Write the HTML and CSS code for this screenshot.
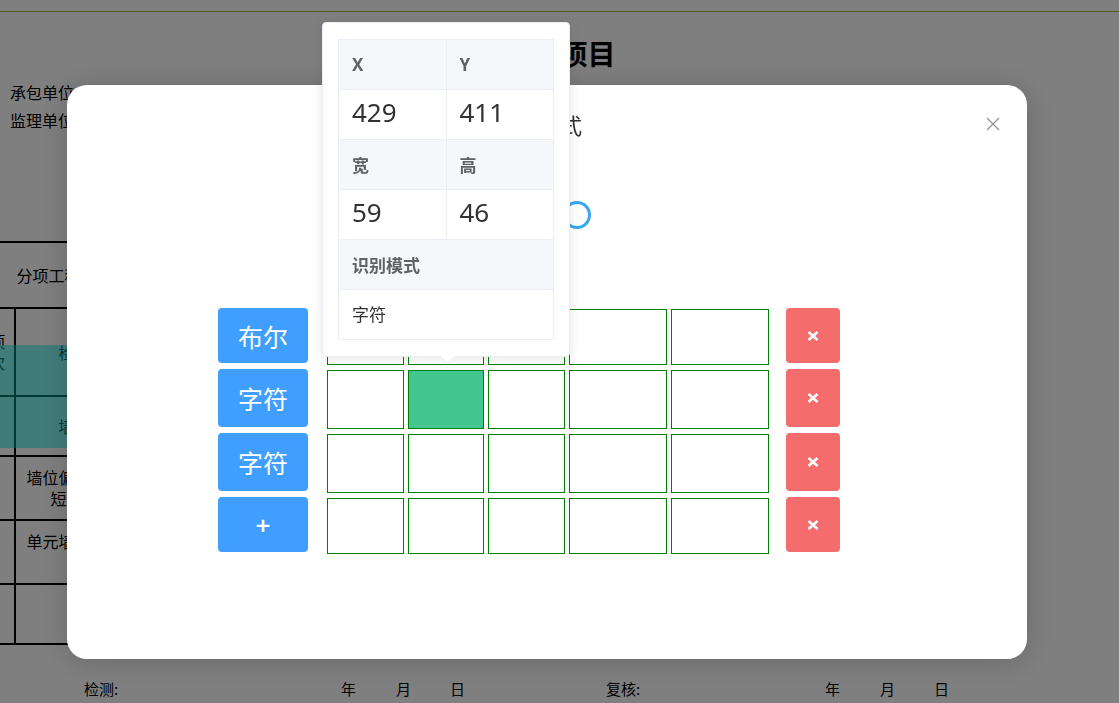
FILE: index.html
```html
<!DOCTYPE html>
<html lang="zh-CN">
<head>
  <meta charset="UTF-8">
  <title>识别模式</title>
  <meta name="viewport" content="width=device-width, initial-scale=1.0">
  <link rel="stylesheet" href="styles.css">
</head>
<body>
  <div class="doc">
    <div class="doc-rule"></div>
    <h1 class="doc-title">检验项目</h1>
    <div class="doc-info">
      <p>承包单位：</p>
      <p>监理单位：</p>
    </div>
    <table class="doc-table">
      <colgroup><col class="c1"><col class="c2"><col class="c3"></colgroup>
      <tr class="h66"><td colspan="3" class="head-cell">分项工程名称</td></tr>
      <tr class="h88"><td>项<br>次</td><td>检查项</td><td></td></tr>
      <tr class="h60"><td></td><td>墙间距</td><td></td></tr>
      <tr class="h64"><td></td><td>墙位偏差长边及<br>短边方向</td><td></td></tr>
      <tr class="h64"><td></td><td>单元墙体垂直度<br>允许</td><td></td></tr>
      <tr class="h60"><td></td><td>平整</td><td></td></tr>
    </table>
    <div class="doc-sign">
      <span class="s-who">检测:</span>
      <span class="s-y">年</span><span class="s-m">月</span><span class="s-d">日</span>
      <span class="s-who2">复核:</span>
      <span class="s-y">年</span><span class="s-m">月</span><span class="s-d">日</span>
    </div>
    <div class="mark"></div>
  </div>

  <div class="mask">
    <div class="dialog">
      <div class="popover">
        <table class="desc">
          <tr><th>X</th><th>Y</th></tr>
          <tr><td class="num">429</td><td class="num">411</td></tr>
          <tr><th>宽</th><th>高</th></tr>
          <tr><td class="num">59</td><td class="num">46</td></tr>
          <tr><th colspan="2">识别模式</th></tr>
          <tr><td colspan="2">字符</td></tr>
        </table>
      </div>

      <div class="dialog-header">
        <span class="dialog-title">识别模式</span>
        <button class="dialog-close">
          <svg width="14" height="14" viewBox="0 0 14 14"><path d="M1 1 L13 13 M13 1 L1 13" stroke="#909399" stroke-width="1.3" fill="none"/></svg>
        </button>
      </div>

      <div class="dialog-body">
        <div class="spin-row">
          <svg width="30" height="30" viewBox="0 0 30 30"><circle cx="15" cy="15" r="12.5" stroke="#38a7ee" stroke-width="3" fill="none"/></svg>
        </div>

        <div class="editor">
          <div class="row">
            <button class="mode-btn">布尔</button>
            <div class="cells"><div class="cell"></div><div class="cell"></div><div class="cell"></div><div class="cell"></div><div class="cell"></div></div>
            <button class="del-btn"><svg width="12" height="10" viewBox="0 0 12 10"><path d="M1.5 1 L10.5 9 M10.5 1 L1.5 9" stroke="#fff" stroke-width="2.6" fill="none"/></svg></button>
          </div>
          <div class="row tall">
            <button class="mode-btn">字符</button>
            <div class="cells"><div class="cell"></div><div class="cell on"></div><div class="cell"></div><div class="cell"></div><div class="cell"></div></div>
            <button class="del-btn"><svg width="12" height="10" viewBox="0 0 12 10"><path d="M1.5 1 L10.5 9 M10.5 1 L1.5 9" stroke="#fff" stroke-width="2.6" fill="none"/></svg></button>
          </div>
          <div class="row tall">
            <button class="mode-btn">字符</button>
            <div class="cells"><div class="cell"></div><div class="cell"></div><div class="cell"></div><div class="cell"></div><div class="cell"></div></div>
            <button class="del-btn"><svg width="12" height="10" viewBox="0 0 12 10"><path d="M1.5 1 L10.5 9 M10.5 1 L1.5 9" stroke="#fff" stroke-width="2.6" fill="none"/></svg></button>
          </div>
          <div class="row">
            <button class="mode-btn add">+</button>
            <div class="cells"><div class="cell"></div><div class="cell"></div><div class="cell"></div><div class="cell"></div><div class="cell"></div></div>
            <button class="del-btn"><svg width="12" height="10" viewBox="0 0 12 10"><path d="M1.5 1 L10.5 9 M10.5 1 L1.5 9" stroke="#fff" stroke-width="2.6" fill="none"/></svg></button>
          </div>
        </div>
      </div>
    </div>
  </div>
</body>
</html>
```

FILE: styles.css
```css
    :root {
      --blue: #409eff;
      --red: #f56c6c;
      --line: #ebeef5;
      --label-bg: #f5f7fa;
      --text: #303133;
      --cell-line: #008000;
    }

    body {
      margin: 0;
      background: #fff;
      color: #000;
      font-family: "Noto Sans CJK SC", sans-serif;
      overflow: hidden;
    }

    /* the sheet behind the dialog */
    .doc {
      position: relative;
      width: 1119px;
      height: 703px;
    }

    .doc-rule {
      height: 11px;
      border-bottom: 1px solid #98b450;
    }

    .doc-title {
      margin: 23px 0 0;
      font-size: 28px;
      line-height: 36px;
      font-weight: bold;
      text-align: center;
    }

    .doc-info {
      margin-top: 7px;
      padding-left: 10px;
      font-size: 16px;
      line-height: 28px;
    }

    .doc-info p {
      margin: 0;
    }

    .doc-table {
      margin: 107px 0 0 -20px;
      width: 1000px;
      border-collapse: collapse;
      font-size: 16px;
      line-height: 21px;
    }

    .doc-table td {
      border: 2px solid #000;
      border-left-width: 1px;
      padding: 0;
      text-align: center;
    }

    .doc-table .c1 { width: 34px; }
    .doc-table .c2 { width: 136px; }

    .doc-table .head-cell {
      text-align: left;
      padding-left: 36px;
      border-left: none;
      border-right: none;
    }

    .h66 { height: 66px; }
    .h88 { height: 88px; }
    .h60 { height: 60px; }
    .h64 { height: 64px; }

    .doc-sign {
      display: flex;
      margin-top: 34px;
      padding-left: 84px;
      font-size: 15px;
      line-height: 20px;
    }

    .s-who { width: 257px; }
    .s-y { width: 55px; }
    .s-m { width: 54px; }
    .s-d { width: 156px; }
    .s-who2 { width: 219px; }

    .mark {
      position: absolute;
      left: 0;
      top: 345px;
      width: 220px;
      height: 103px;
      background: rgba(0, 240, 230, 0.48);
    }

    /* dialog */
    .mask {
      position: fixed;
      inset: 0;
      background: rgba(0, 0, 0, 0.5);
      padding: 85px 0 0 67px;
      box-sizing: border-box;
    }

    .dialog {
      position: relative;
      width: 960px;
      height: 574px;
      background: #fff;
      border-radius: 20px;
      box-shadow: 0 2px 30px rgba(0, 0, 0, 0.18);
    }

    .dialog-header {
      display: flex;
      align-items: center;
      padding: 24px 22px 0 28px;
    }

    .dialog-title {
      flex: 1;
      text-align: center;
      font-size: 22px;
      line-height: 30px;
      color: var(--text);
    }

    .dialog-close {
      width: 24px;
      height: 24px;
      padding: 0;
      border: none;
      background: none;
      display: flex;
      align-items: center;
      justify-content: center;
    }

    .spin-row {
      margin-top: 61px;
      padding-left: 495px;
      height: 30px;
    }

    .spin-row svg {
      display: block;
    }

    .editor {
      margin-top: 78px;
      padding-left: 151px;
      display: flex;
      flex-direction: column;
      gap: 4px;
    }

    .row {
      display: flex;
      align-items: flex-start;
    }

    .mode-btn {
      width: 90px;
      height: 55px;
      border: none;
      border-radius: 4px;
      background: var(--blue);
      color: #fff;
      font-family: "Noto Sans CJK SC", sans-serif;
      font-size: 25px;
      padding: 0;
    }

    .mode-btn.add {
      font-family: "Noto Sans", sans-serif;
      font-size: 26px;
      font-weight: 600;
    }

    .cells {
      display: flex;
      gap: 4px;
      margin: 1px 17px 0 19px;
    }

    .cell {
      height: 56px;
      border: 1px solid var(--cell-line);
      box-sizing: border-box;
      width: 77px;
    }

    .cell:nth-child(2) { width: 76px; }
    .cell:nth-child(3) { width: 77px; }
    .cell:nth-child(4),
    .cell:nth-child(5) { width: 98px; }

    .cell.on {
      background: #43c690;
    }

    .del-btn {
      width: 54px;
      height: 55px;
      border: none;
      border-radius: 4px;
      background: var(--red);
      display: flex;
      align-items: center;
      justify-content: center;
      padding: 0;
    }

    .row.tall .mode-btn,
    .row.tall .del-btn { height: 58px; }
    .row.tall .cell { height: 59px; }

    /* position popover */
    .popover {
      position: absolute;
      left: 255px;
      top: -63px;
      width: 248px;
      box-sizing: border-box;
      padding: 16px 15px;
      background: #fff;
      border: 1px solid var(--line);
      border-radius: 4px;
      box-shadow: 0 2px 12px rgba(0, 0, 0, 0.1);
      z-index: 2;
    }

    .popover::after {
      content: "";
      position: absolute;
      left: 119px;
      bottom: -6px;
      width: 10px;
      height: 10px;
      background: #fff;
      border-right: 1px solid var(--line);
      border-bottom: 1px solid var(--line);
      transform: rotate(45deg);
    }

    .desc {
      width: 216px;
      border-collapse: collapse;
      table-layout: fixed;
      font-family: "Noto Sans", "Noto Sans CJK SC", sans-serif;
    }

    .desc th,
    .desc td {
      border: 1px solid var(--line);
      height: 50px;
      padding: 0 0 0 13px;
      text-align: left;
      box-sizing: border-box;
    }

    .desc th {
      background: var(--label-bg);
      color: #606266;
      font-size: 17px;
      font-weight: bold;
    }

    .desc td {
      color: var(--text);
      font-size: 17px;
      padding-bottom: 3px;
    }

    .desc td.num {
      font-size: 26px;
      padding-bottom: 5px;
    }
```
